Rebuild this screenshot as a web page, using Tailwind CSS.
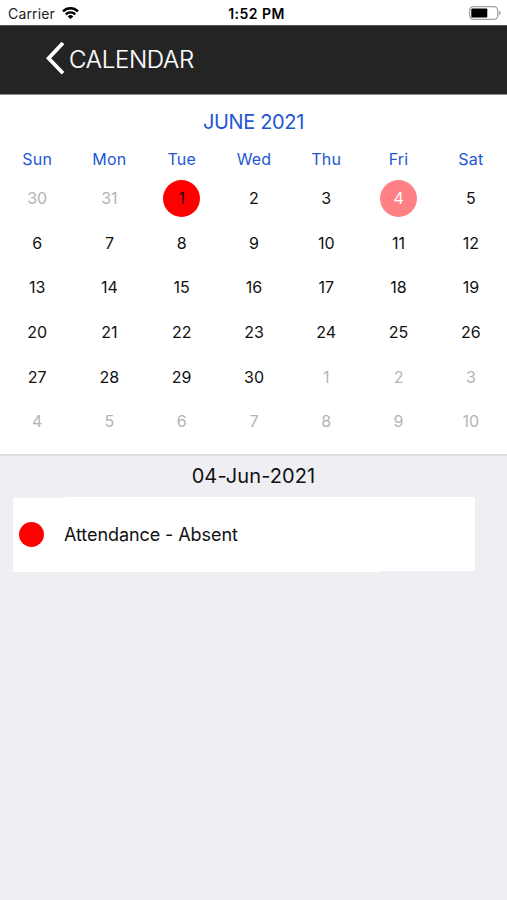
<!DOCTYPE html>
<html lang="en">
<head>
    <meta charset="UTF-8" />
    <meta name="viewport" content="width=device-width, initial-scale=1.0" />
    <title>Calendar</title>

    <script src="https://cdn.jsdelivr.net/npm/@tailwindcss/browser@4"></script>
</head>
<body class="bg-[#eeeef3] font-['Inter','Liberation_Sans',sans-serif] text-black min-h-screen">

    <div id="status-bar" class="bg-white h-[25px] grid grid-cols-3 items-center pl-2 pr-1.5 pt-[3px]">
        <div class="flex items-center gap-[7px]">
            <span class="text-[14px] leading-5 tracking-[0.15px] text-[#222222]">Carrier</span>
            <svg class="w-[17px] h-3 mt-[-2px]" viewBox="0 0 17 12" fill="none" stroke="#000" stroke-width="2.3">
                <path d="M1 4.3a10.8 10.8 0 0 1 15 0" />
                <path d="M3.7 7.3a6.9 6.9 0 0 1 9.6 0" />
                <path d="M8.5 12 5.7 9.4a4 4 0 0 1 5.6 0z" fill="#000" stroke="none" />
            </svg>
        </div>
        <div class="text-[14px] leading-5 font-semibold tracking-[0.45px] text-center whitespace-nowrap pl-1">1:52 PM</div>
        <svg class="w-8 h-[14px] mt-[-2px] justify-self-end" viewBox="0 0 32 14">
            <rect x="0.7" y="0.7" width="28" height="12.6" rx="3.8" fill="none" stroke="#a3a3a3" stroke-width="1.3" />
            <rect x="2.3" y="2.4" width="16" height="9.2" rx="1.2" fill="#000" />
            <path d="M30.2 4.8v4.4c1.9-.7 1.9-3.7 0-4.4z" fill="#8f8f8f" />
        </svg>
    </div>

    <nav id="header" class="bg-[#242424] h-[70px] border-t border-b border-t-[#555555] border-b-[#8c8c8c] flex items-center pl-[45px]">
        <a class="flex items-center gap-1 no-underline text-white" href="#">
            <svg class="w-5 h-[34px] mt-[-4px]" viewBox="0 0 20 34" fill="none" stroke="#fff" stroke-width="3.8">
                <path d="M18 2 3.6 17.2 18 32.2" />
            </svg>
            <span class="text-[24px] leading-8 font-light [-webkit-text-stroke:0.2px_white] tracking-[-0.3px] mt-[-1px]">CALENDAR</span>
        </a>
    </nav>

    <div id="calendar" class="bg-white h-[361px] border-b-2 border-[#dddde0] pt-[13px]">
        <h1 class="text-[20px] leading-7 tracking-[-0.35px] text-center text-[#2456d3]">JUNE 2021</h1>
        <div class="grid grid-cols-7 text-center text-[16px] leading-6 tracking-[0.2px] text-[#2456d3] mt-[11px] pl-px">
            <span>Sun</span>
            <span>Mon</span>
            <span>Tue</span>
            <span>Wed</span>
            <span>Thu</span>
            <span>Fri</span>
            <span>Sat</span>
        </div>
        <div class="grid grid-cols-7 auto-rows-[44.6px] place-items-center text-[16px] text-[#111111] mt-[5px] pl-px">
            <span class="text-[#b4b4b4]">30</span>
            <span class="text-[#b4b4b4]">31</span>
            <span class="flex items-center justify-center size-[37px] rounded-full bg-[#ff0000] text-[#3a0000]">1</span>
            <span>2</span>
            <span>3</span>
            <span class="flex items-center justify-center size-[37px] rounded-full bg-[#ff8085] text-white">4</span>
            <span>5</span>

            <span>6</span>
            <span>7</span>
            <span>8</span>
            <span>9</span>
            <span>10</span>
            <span>11</span>
            <span>12</span>

            <span>13</span>
            <span>14</span>
            <span>15</span>
            <span>16</span>
            <span>17</span>
            <span>18</span>
            <span>19</span>

            <span>20</span>
            <span>21</span>
            <span>22</span>
            <span>23</span>
            <span>24</span>
            <span>25</span>
            <span>26</span>

            <span>27</span>
            <span>28</span>
            <span>29</span>
            <span>30</span>
            <span class="text-[#b4b4b4]">1</span>
            <span class="text-[#b4b4b4]">2</span>
            <span class="text-[#b4b4b4]">3</span>

            <span class="text-[#b4b4b4]">4</span>
            <span class="text-[#b4b4b4]">5</span>
            <span class="text-[#b4b4b4]">6</span>
            <span class="text-[#b4b4b4]">7</span>
            <span class="text-[#b4b4b4]">8</span>
            <span class="text-[#b4b4b4]">9</span>
            <span class="text-[#b4b4b4]">10</span>
        </div>
    </div>

    <div id="events">
        <h2 class="text-[20px] leading-7 tracking-[0.1px] text-center text-[#111111] pt-1.5">04-Jun-2021</h2>
        <!-- card edges step by a pixel at the top left and bottom right -->
        <div class="bg-white h-[75px] ml-[13px] mr-8 mt-[7px] pl-1.5 flex items-center gap-5 [clip-path:polygon(0_1px,52px_1px,52px_0,100%_0,100%_74px,367px_74px,367px_100%,0_100%)]">
            <span class="size-[25px] rounded-full bg-[#ff0000] mt-[-1px]"></span>
            <span class="text-[18px] leading-6 tracking-[-0.08px] text-[#111111]">Attendance - Absent</span>
        </div>
    </div>

</body>
</html>
